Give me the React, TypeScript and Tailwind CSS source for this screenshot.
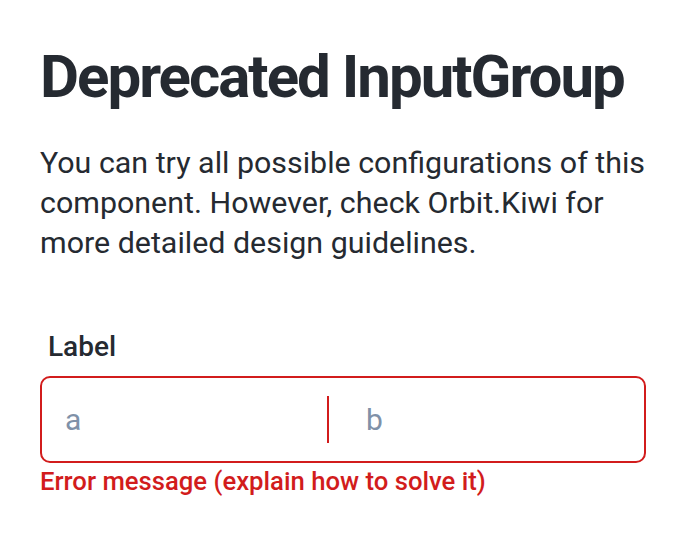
export default function App() {
  return (
    <div className="min-h-screen bg-white px-10 pt-[41px] text-[#252a31]" style={{ fontFamily: 'Roboto, "Noto Sans", sans-serif' }}>
      <h1 className="text-[60px] font-bold leading-[72px] tracking-[-2px]">Deprecated InputGroup</h1>
      <p className="mt-[30px] text-[30.4px] leading-[40px]">
        You can try all possible configurations of this component. However, check Orbit.Kiwi for more
        detailed design guidelines.
      </p>
      <div className="mt-[64px]">
        <label className="block pl-2 text-[28px] font-medium leading-[40px]">Label</label>
        <div className="mt-[9px] flex h-[87px] items-center rounded-[10px] border-2 border-[#d21c1c]">
          <div className="flex h-full w-[285px] items-center pl-[23px] text-[30px] text-[#7f91a8]">a</div>
          <div className="h-[47px] w-[2px] bg-[#d21c1c]" />
          <div className="flex h-full flex-1 items-center pl-[37px] text-[30px] text-[#7f91a8]">b</div>
        </div>
        <div className="mt-[2px] text-[25.7px] font-medium leading-[32px] text-[#d21c1c]">
          Error message (explain how to solve it)
        </div>
      </div>
    </div>
  );
}
